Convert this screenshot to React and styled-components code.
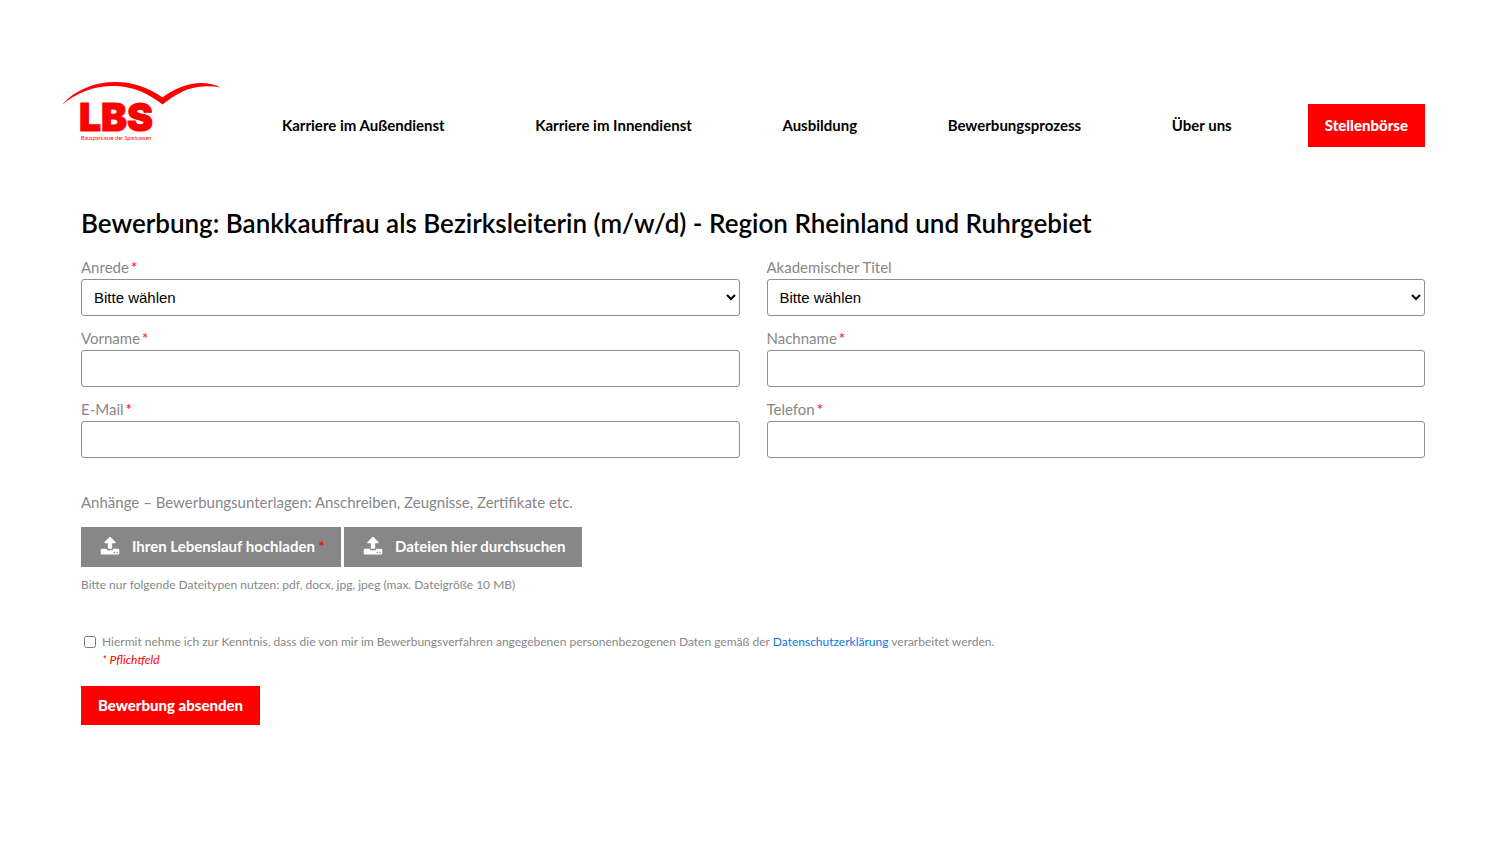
import React from "react";
import styled, { createGlobalStyle } from "styled-components";

const colors = {
  red: "#ff0000",
  grey: "#878787",
  border: "#8f8f8f",
  link: "#0a78e6",
};

const navItems = [
  "Karriere im Außendienst",
  "Karriere im Innendienst",
  "Ausbildung",
  "Bewerbungsprozess",
  "Über uns",
];

const fields = [
  { id: "anrede", label: "Anrede", required: true, select: true },
  { id: "titel", label: "Akademischer Titel", select: true },
  { id: "vorname", label: "Vorname", required: true },
  { id: "nachname", label: "Nachname", required: true },
  { id: "email", label: "E-Mail", required: true, type: "email" },
  { id: "telefon", label: "Telefon", required: true, type: "tel" },
];

const Logo = () => (
  <LogoSvg viewBox="0 0 320 120" role="img" aria-label="LBS">
    <path
      d="M1 46C28 16 66 0 109 0C146 0 176 12 203 31C226 13 254 2 281 2C296 2 308 5 319 11C303 8 288 8 273 10C247 14 226 27 203 45C177 24 144 8 105 8C64 8 31 22 1 46Z"
      fill={colors.red}
    />
    <LogoName x="36" y="97">
      LBS
    </LogoName>
    <LogoClaim x="40" y="115">
      Bausparkasse der Sparkassen
    </LogoClaim>
  </LogoSvg>
);

const UploadIcon = () => (
  <svg width="20" height="20" viewBox="0 0 1792 1792" fill="currentColor" aria-hidden="true">
    <path d="M1344 1472q0-26-19-45t-45-19-45 19-19 45 19 45 45 19 45-19 19-45zm256 0q0-26-19-45t-45-19-45 19-19 45 19 45 45 19 45-19 19-45zm128-224v320q0 40-28 68t-68 28h-1472q-40 0-68-28t-28-68v-320q0-40 28-68t68-28h427q21 56 70.500 92t110.500 36h256q61 0 110.500-36t70.500-92h427q40 0 68 28t28 68zm-325-648q-17 40-59 40h-256v448q0 26-19 45t-45 19h-256q-26 0-45-19t-19-45v-448h-256q-42 0-59-40-17-39 14-69l448-448q18-19 45-19t45 19l448 448q31 30 14 69z" />
  </svg>
);

const Field = ({ id, label, required, select, type = "text" }) => (
  <FieldWrap>
    <Label htmlFor={id}>
      {label}
      {required && <Star>*</Star>}
    </Label>
    {select ? (
      <Select id={id} defaultValue="">
        <option value="">Bitte wählen</option>
      </Select>
    ) : (
      <Input id={id} type={type} />
    )}
  </FieldWrap>
);

const App = () => (
  <>
    <GlobalStyle />
    <Header>
      <LogoLink href="#">
        <Logo />
      </LogoLink>
      <Nav>
        {navItems.map((item) => (
          <NavLink href="#" key={item}>
            {item}
          </NavLink>
        ))}
      </Nav>
      <JobsLink href="#">Stellenbörse</JobsLink>
    </Header>
    <Main>
      <Title>
        Bewerbung: Bankkauffrau als Bezirksleiterin (m/w/d) - Region Rheinland und Ruhrgebiet
      </Title>
      <form onSubmit={(e) => e.preventDefault()}>
        <Grid>
          {fields.map((field) => (
            <Field key={field.id} {...field} />
          ))}
        </Grid>
        <UploadTitle>
          Anhänge – Bewerbungsunterlagen: Anschreiben, Zeugnisse, Zertifikate etc.
        </UploadTitle>
        <UploadRow>
          <UploadButton type="button">
            <UploadIcon />
            <span>
              Ihren Lebenslauf hochladen <UploadStar>*</UploadStar>
            </span>
          </UploadButton>
          <UploadButton type="button">
            <UploadIcon />
            <span>Dateien hier durchsuchen</span>
          </UploadButton>
        </UploadRow>
        <Hint>Bitte nur folgende Dateitypen nutzen: pdf, docx, jpg, jpeg (max. Dateigröße 10 MB)</Hint>
        <Consent>
          <Checkbox id="consent" type="checkbox" />
          <div>
            <label htmlFor="consent">
              Hiermit nehme ich zur Kenntnis, dass die von mir im Bewerbungsverfahren angegebenen
              personenbezogenen Daten gemäß der <TextLink href="#">Datenschutzerklärung</TextLink>{" "}
              verarbeitet werden.
            </label>
            <Mandatory>* Pflichtfeld</Mandatory>
          </div>
        </Consent>
        <Submit type="submit">Bewerbung absenden</Submit>
      </form>
    </Main>
  </>
);

export default App;

const GlobalStyle = createGlobalStyle`
  * {
    box-sizing: border-box;
  }
  body {
    margin: 0;
    background: #fff;
    color: #000;
    font-family: "Lato", "Open Sans", sans-serif;
    font-size: 15px;
  }
`;

const Header = styled.header`
  display: flex;
  align-items: flex-end;
  padding: 82px 75px 0 61px;
`;

const LogoLink = styled.a`
  flex: none;
  width: 160px;
  margin: 0 61px 5px 0;
`;

const LogoSvg = styled.svg`
  display: block;
  width: 100%;
`;

const LogoName = styled.text`
  fill: ${colors.red};
  stroke: ${colors.red};
  stroke-width: 2px;
  font-family: "Inter", sans-serif;
  font-size: 78px;
  font-weight: 900;
`;

const LogoClaim = styled.text`
  fill: ${colors.red};
  font-size: 11px;
`;

const Nav = styled.nav`
  flex: 1;
  display: flex;
  justify-content: space-between;
  margin-right: 76px;
`;

const NavLink = styled.a`
  color: #000;
  font-size: 15px;
  font-weight: 700;
  line-height: 43px;
  text-decoration: none;
  white-space: nowrap;
`;

const JobsLink = styled.a`
  padding: 0 17px;
  background: ${colors.red};
  color: #fff;
  font-size: 15px;
  font-weight: 900;
  line-height: 43px;
  text-decoration: none;
`;

const Main = styled.main`
  padding: 56px 75px 48px 81px;
`;

const Title = styled.h1`
  margin: 0 0 12px;
  font-size: 26px;
  font-weight: 600;
  line-height: 40px;
`;

const Grid = styled.div`
  display: grid;
  grid-template-columns: 1fr 1fr;
  gap: 10px 27px;
`;

const FieldWrap = styled.div`
  display: flex;
  flex-direction: column;
`;

const Label = styled.label`
  color: ${colors.grey};
  font-size: 15px;
  line-height: 24px;
`;

const Star = styled.span`
  margin-left: 2px;
  color: ${colors.red};
`;

const Input = styled.input`
  width: 100%;
  height: 37px;
  padding: 0 12px;
  border: 1px solid ${colors.border};
  border-radius: 3px;
  background: #fff;
  color: #000;
  font-family: "Liberation Sans", Arial, sans-serif;
  font-size: 15px;
`;

const Select = styled(Input).attrs({ as: "select" })`
  padding: 0 0 0 8px;
`;

const UploadTitle = styled.p`
  margin: 32px 0 13px;
  color: ${colors.grey};
  font-size: 15px;
  line-height: 24px;
`;

const UploadRow = styled.div`
  display: flex;
  gap: 3px;
`;

const UploadButton = styled.button`
  display: flex;
  align-items: center;
  gap: 12px;
  height: 40px;
  padding: 0 16px 2px 19px;
  border: 0;
  background: ${colors.grey};
  color: #fff;
  font-family: inherit;
  font-size: 15px;
  font-weight: 700;
`;

const UploadStar = styled.span`
  color: ${colors.red};
`;

const Hint = styled.p`
  margin: 8px 0 38px;
  color: ${colors.grey};
  font-size: 12px;
  line-height: 20px;
`;

const Consent = styled.div`
  display: flex;
  align-items: flex-start;
  gap: 6px;
  color: ${colors.grey};
  font-size: 12px;
  line-height: 18px;
`;

const Checkbox = styled.input`
  width: 12px;
  height: 12px;
  margin: 3px 0 0 3px;
`;

const TextLink = styled.a`
  color: ${colors.link};
  text-decoration: none;
`;

const Mandatory = styled.div`
  color: ${colors.red};
  font-style: italic;
`;

const Submit = styled.button`
  height: 39px;
  margin-top: 17px;
  padding: 0 17px 2px;
  border: 0;
  background: ${colors.red};
  color: #fff;
  font-family: inherit;
  font-size: 15px;
  font-weight: 900;
`;
